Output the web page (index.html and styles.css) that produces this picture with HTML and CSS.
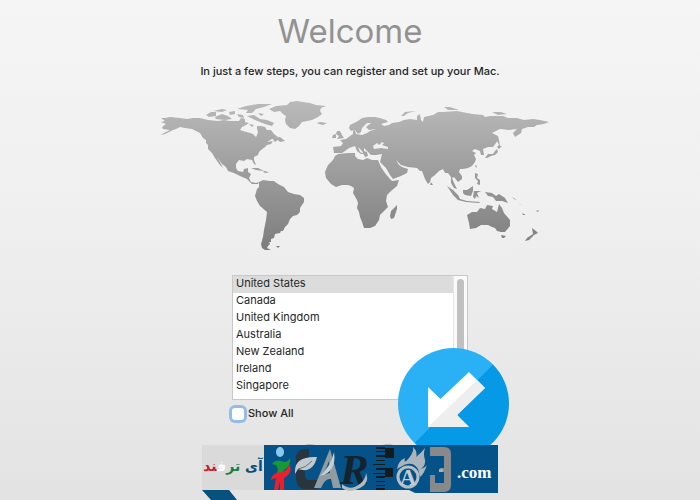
FILE: index.html
```html
<!DOCTYPE html>
<html lang="en">
<head>
<meta charset="utf-8">
<title>Welcome</title>
<link rel="stylesheet" href="styles.css">
</head>
<body>
<main class="setup">
  <h1 class="title">Welcome</h1>
  <p class="intro">In just a few steps, you can register and set up your Mac.</p>
  <svg class="map" viewBox="150 95 410 160" aria-hidden="true">
    <defs>
      <linearGradient id="land" gradientUnits="userSpaceOnUse" x1="0" y1="100" x2="0" y2="250">
        <stop offset="0" stop-color="#bababa"/><stop offset="1" stop-color="#7d7d7d"/>
      </linearGradient>
    </defs>
    <g fill="url(#land)">
      <path d="M161 118L165 118 170 117 180 118 187 119 193 118 200 118 208 120 218 121 224 120 230 121 239 121 241 118 245 119 245 122 249 123 246 125 242 127 240 130 243 131 250 133 253 134 256 137 257 135 258 132 257 129 257 126 261 126 265 127 267 130 271 130 274 134 278 137 272 139 267 142 273 141 271 144 267 145 265 147 261 150 259 152 258 155 254 157 254 160 256 165 254 164 252 160 247 159 244 161 239 160 236 164 236 168 238 171 243 172 244 169 248 168 248 172 251 174 249 178 251 182 256 183 259 182 258 184 252 184 247 179 240 176 234 173 228 171 226 167 222 164 217 157 221 164 223 168 220 165 215 158 212 153 208 149 208 145 206 143 206 140 203 138 200 133 196 131 192 129 185 128 180 127 176 129 173 130 165 134 160 135 170 130 163 129 162 127 166 124 161 122 165 121Z"/>
      <path d="M206 115L211 112 216 112 216 116 209 117ZM215 117L222 114 228 116 232 119 225 120 216 119ZM213 111L222 109 227 110 222 112ZM229 112L235 111 235 114 230 115ZM237 109L246 106 258 104 272 104 264 107 256 109 252 113 246 113 248 110ZM237 114L243 115 244 118 239 117ZM247 116L254 115 260 119 267 120 274 123 272 126 265 124 260 122 255 120ZM249 124L254 125 252 127ZM272 138L280 137 285 141 280 142 278 140 275 142ZM251 168L258 168 264 171 256 170ZM264 171L269 172 266 173 263 172ZM258 113L264 114 261 116Z"/>
      <path d="M269 109L276 106 287 105 290 102 297 101 303 102 310 103 316 105 326 106 321 108 320 111 322 114 318 117 312 120 307 121 302 122 299 126 295 129 290 128 286 124 285 120 286 116 283 114 280 111 274 112ZM317 123L320 122 327 123 323 125 319 124Z"/>
      <path d="M259 182L263 180 270 181 274 181 278 184 284 187 288 192 294 194 300 195 304 198 304 202 300 208 300 212 297 215 293 216 290 219 288 224 285 227 283 231 281 231 280 233 275 234 274 238 271 239 271 242 269 242 270 244 268 246 267 248 271 250 265 250 262 248 261 244 263 237 264 230 266 220 267 212 260 206 257 201 255 196 257 189 259 187ZM276 246L280 246 278 248Z"/>
      <path d="M338 154L348 153 355 153 355 156 358 159 363 160 367 158 372 160 378 160 381 167 385 173 390 179 392 181 399 180 397 186 391 191 387 195 386 201 388 207 383 212 380 215 379 220 375 226 370 228 364 228 362 222 360 217 359 212 357 208 358 203 357 200 353 193 354 188 351 186 348 185 342 185 336 187 331 184 326 178 325 172 328 165 333 160 335 156ZM391 211L394 208 397 205 397 209 394 218 391 219 390 216Z"/>
      <path d="M333 147L341 146 343 143 340 140 346 139 350 136 353 134 353 131 355 130 356 134 362 135 367 133 370 131 376 129 369 130 366 127 371 123 367 123 362 128 361 132 358 134 355 130 351 131 349 128 350 125 354 123 358 121 362 118 368 117 375 117 380 118 386 120 388 122 381 124 384 126 389 125 392 123 399 122 404 120 410 119 417 120 417 116 420 114 421 120 423 122 424 117 433 115 438 112 443 112 457 111 467 113 473 114 483 115 485 117 490 116 503 116 508 118 517 118 524 120 533 119 540 120 549 122 544 124 537 125 534 127 528 127 522 129 521 133 515 137 513 133 517 129 509 130 500 129 496 131 492 133 498 136 498 140 496 143 493 147 488 147 483 149 484 155 481 155 480 151 475 149 472 151 476 153 474 155 476 159 475 162 472 166 468 168 463 169 460 169 459 172 462 176 462 179 458 182 454 177 452 178 454 183 457 189 454 188 451 183 451 177 448 173 445 173 443 169 439 171 435 175 431 178 430 182 428 184 425 179 422 171 420 171 417 168 408 167 401 165 396 160 399 165 402 167 408 169 407 173 401 176 393 179 390 175 386 168 380 162 381 158 382 154 376 155 371 155 367 151 364 148 364 151 367 152 368 156 365 157 362 151 358 147 360 152 364 154 361 154 357 151 355 146 349 148 345 151 342 153 334 153Z"/>
      <path d="M337 131L340 131 342 135 344 138 337 139 339 136 336 134ZM333 135L336 134 336 138 332 138ZM401 116L405 112 416 111 408 113 404 116ZM444 107L450 107 459 110 448 110ZM492 112L501 112 507 114 498 115ZM498 136L499 140 500 146 502 146 499 149 497 147 499 145 497 141ZM497 149L498 152 495 155 491 156 487 158 485 158 488 154 493 154 495 151ZM475 165L477 166 476 168ZM475 173L478 174 477 178 480 180 480 185 477 184 478 181 475 178ZM431 182L433 185 430 185Z"/>
      <path d="M447 186L453 190 458 195 460 199 467 201 480 202 479 203 466 202 458 200 453 195ZM463 190L467 190 473 186 473 191 471 196 465 195 463 193ZM474 191L481 191 477 193 479 198 476 196 475 199 473 197ZM485 192L492 193 496 196 499 194 505 198 508 203 502 201 496 201 493 197 488 196ZM467 215L472 212 477 212 480 208 485 209 487 205 493 206 492 209 497 212 499 204 502 208 504 213 510 220 510 226 505 232 501 232 497 231 495 228 492 227 488 225 481 225 476 228 470 229 469 223ZM501 235L506 236 504 238 502 238ZM532 228L536 231 538 233 534 235 529 240 525 241 527 238 533 234ZM512 197L517 200 514 199ZM519 203L523 206 520 204ZM522 213L526 215 523 215ZM536 211L539 210 538 212Z"/>
    </g>
    <path class="sea" d="M373 146L377 143 379 145 382 142 384 143 382 145 388 147 388 149 381 148 374 149Z"/>
  </svg>

  <section class="region">
    <div class="list-frame">
      <select class="countries" size="7" aria-label="Country">
        <option selected>United States</option>
        <option>Canada</option>
        <option>United Kingdom</option>
        <option>Australia</option>
        <option>New Zealand</option>
        <option>Ireland</option>
        <option>Singapore</option>
      </select>
      <div class="track"><div class="thumb"></div></div>
    </div>
    <label class="show-all"><input class="check" type="checkbox">Show All</label>
  </section>

  <svg class="nav-buttons" viewBox="0 0 120 30" aria-hidden="true">
    <circle cx="22" cy="15" r="14"/><circle cx="100" cy="15" r="14"/>
  </svg>

  <svg class="badge" viewBox="0 0 111 111" aria-hidden="true">
    <defs>
      <linearGradient id="split" x1="0" y1="0" x2="1" y2="1">
        <stop offset=".5" stop-color="#29b0f5"/><stop offset=".5" stop-color="#0699e6"/>
      </linearGradient>
    </defs>
    <circle cx="55.500" cy="55.500" r="55.500" fill="url(#split)"/>
    <path d="M30 39L42.500 51 71 24 87 40 59 67 71 79H30Z" fill="#fff"/>
    <path d="M79 32L87 40 59 67 71 79H30Z" fill="#eee"/>
  </svg>

  <footer class="banner">
    <div class="persian" lang="fa" dir="rtl"><span class="blue">آی</span> <span class="green">تر</span><span class="white">ف</span><span class="red">ند</span></div>
    <svg class="wordmark" viewBox="0 0 234 48" role="img" aria-label="ITARFAND">
      <path fill="#055288" d="M0 0H234V48H151L145 45H0Z"/>
      <ellipse cx="16" cy="7" rx="4" ry="5" fill="#8bc9eb"/>
      <path d="M8 19Q12 13 20 17Q24 17 26 13Q28 20 19 26L19 31H11Q16 25 12 20Z" fill="#159a37"/>
      <path d="M7 35Q8 27 18 27Q25 24 25 19Q30 27 20 33V45H16V36L14 45H10L12 33Z" fill="#e7222c"/>
      <path d="M32 4H41V13H45V4H41Q32 4 32 14V32Q32 44 42 44H53V35H45Q41 35 41 30V4Z" fill="#29343c"/>
      <path d="M31 26Q31 11 53 12Q49 29 34 24L31 29Z" fill="#c1c9cc"/>
      <path d="M34 24Q42 23 48 16" fill="none" stroke="#66747c"/>
      <path d="M50 43L66 4 77 43H69L67 34Q61 33 57 43ZM60 29L66 28 65 16Z" fill="#909ba2" fill-rule="evenodd"/>
      <path d="M56 31Q67 21 70 7Q73 27 56 31Z" fill="#c8cfd1"/>
      <text x="76" y="39" font-family="Liberation Serif, serif" font-size="43" font-style="italic" font-weight="bold" fill="#15232d">R</text>
      <path d="M78 39Q87 47 97 38Q102 33 102 28Q106 38 96 43Q85 49 78 43Z" fill="#b2babd"/>
      <g fill="#111b22">
        <path d="M112 2H121V4H112ZM112 6H130V7H112ZM112 10H121V12H112ZM112 15H121V16H112ZM109 19H121V20H109ZM112 23H121V25H112ZM109 28H121V29H109ZM112 31H121V33H112ZM112 36H121V37H112ZM112 40H121V41H112ZM112 43H121V45H112Z"/>
        <path d="M121 3H130V13H121ZM121 23H129V32H121Z"/>
      </g>
      <path d="M133 24Q134 16 141 13Q139 20 145 13Q150 7 149 2Q154 7 152 12Q157 8 161 3Q159 9 161 15Q162 20 157 24Q162 22 163 20Q160 29 156 32L154 24Q149 16 140 20Z" fill="#aab4bc"/>
      <circle cx="144" cy="32" r="10" fill="#055288" stroke="#b4bec6" stroke-width="3"/>
      <text x="144" y="40" text-anchor="middle" font-family="Liberation Serif, serif" font-size="23" font-weight="bold" fill="#c4cdd3">A</text>
      <path d="M166 2H180Q187 2 187 9V40Q187 47 180 47H166V30H171V38H180V27H176V23H180V11H166Z" fill="#898989"/>
      <path d="M175 24H179V27H175Z" fill="#a9b0b5"/>
      <text x="193" y="33" font-family="Liberation Serif, serif" font-size="17" font-weight="bold" fill="#fff">.com</text>
    </svg>
    <svg class="tail" viewBox="0 0 35 10" aria-hidden="true"><path d="M0 0H27L35 10H9Z" fill="#07517f"/></svg>
  </footer>
</main>
</body>
</html>
```
FILE: styles.css
```css
* { box-sizing: border-box; }

body {
  margin: 0;
  min-height: 100vh;
  overflow: hidden;
  background: linear-gradient(#f5f5f5, #f0f0f0 40%, #e3e3e3);
  color: #262626;
  font: 500 11px/17px Inter, "Liberation Sans", sans-serif;
}

.setup {
  position: relative;
  display: flex;
  flex-direction: column;
  align-items: center;
  min-height: 100vh;
  padding-top: 9px;
  overflow: hidden;
}

.title {
  margin: 0;
  color: #929292;
  font-size: 33px;
  font-weight: 400;
  line-height: 44px;
}

.intro { margin: 10px 0 15px; }

.map {
  width: 100%;
  max-width: 410px;
  margin-left: 10px;
}

.sea { fill: #f0f0f0; }

.region {
  display: flex;
  flex-direction: column;
  width: 236px;
  margin-top: 20px;
}

.list-frame {
  display: flex;
  border: 1px solid #c8c8c8;
  background: #fff;
}

.countries {
  flex: 1;
  height: 123px;
  padding: 0;
  border: 0;
  outline: 0;
  overflow: hidden;
  background: #fff;
  color: #262626;
  font: inherit;
  scrollbar-width: none;
}

.countries option {
  min-height: 17px;
  padding: 0 3px;
  line-height: 17px;
}

.countries option:checked {
  background: #dcdcdc linear-gradient(#dcdcdc, #dcdcdc);
  color: #262626;
}

.track {
  width: 14px;
  padding: 3px;
  border-left: 1px solid #e6e6e6;
  background: #fafafa;
}

.thumb {
  height: 88px;
  border-radius: 4px;
  background: #c1c1c1;
}

.show-all {
  display: flex;
  align-items: center;
  gap: 4px;
  margin-top: 5px;
}

.check {
  appearance: none;
  width: 12px;
  height: 12px;
  margin: 0;
  border-radius: 3px;
  background: #fff;
  box-shadow: 0 0 0 3px #94bce8;
}

.nav-buttons {
  position: absolute;
  top: 443px;
  left: calc(50% - 62px);
  width: 120px;
  fill: #b7b7b7;
}

.badge {
  position: absolute;
  top: 348px;
  left: calc(50% + 48px);
  width: 111px;
}

.banner {
  position: absolute;
  top: 445px;
  left: calc(50% - 148px);
  display: grid;
  grid-template-columns: 62px 234px;
}

.persian {
  height: 45px;
  background: #dadada;
  font: bold 14px/42px "DejaVu Sans", sans-serif;
  text-align: center;
  white-space: nowrap;
}

.blue { color: #07517f; }
.green { color: #16813c; }
.white { color: #fff; }
.red { color: #c61c2e; }

.wordmark { width: 234px; }

.tail {
  width: 35px;
  margin-top: -3px;
}
```
